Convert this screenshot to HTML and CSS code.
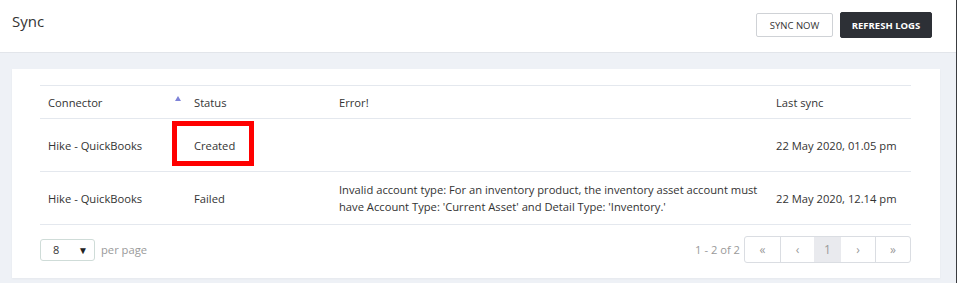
FILE: index.html
```html
<!DOCTYPE html>
<html lang="en">
<head>
  <meta charset="UTF-8">
  <meta name="viewport" content="width=device-width, initial-scale=1.0">
  <title>Sync</title>
  <link rel="stylesheet" href="styles.css">
</head>
<body>
  <div class="page">
    <header class="topbar">
      <h1 class="page-title">Sync</h1>
      <div class="actions">
        <button class="btn btn-light">SYNC NOW</button>
        <button class="btn btn-dark">REFRESH LOGS</button>
      </div>
    </header>

    <main class="content">
      <div class="panel">
        <table class="log-table">
          <colgroup>
            <col style="width: 146px">
            <col style="width: 145px">
            <col style="width: 437px">
            <col>
          </colgroup>
          <thead>
            <tr>
              <th class="sortable">Connector <span class="sort-arrow"></span></th>
              <th>Status</th>
              <th>Error!</th>
              <th>Last sync</th>
            </tr>
          </thead>
          <tbody>
            <tr>
              <td>Hike - QuickBooks</td>
              <td class="status-cell">Created <span class="highlight"></span></td>
              <td></td>
              <td>22 May 2020, 01.05 pm</td>
            </tr>
            <tr>
              <td>Hike - QuickBooks</td>
              <td>Failed</td>
              <td>Invalid account type: For an inventory product, the inventory asset account must have Account Type: 'Current Asset' and Detail Type: 'Inventory.'</td>
              <td>22 May 2020, 12.14 pm</td>
            </tr>
          </tbody>
        </table>

        <div class="table-footer">
          <div class="per-page">
            <div class="select">
              <span>8</span>
              <span class="select-arrow">&#9660;</span>
            </div>
            <span class="muted">per page</span>
          </div>
          <div class="pager">
            <span class="muted">1 - 2 of 2</span>
            <ul class="pages">
              <li class="w35">&laquo;</li>
              <li class="w33">&lsaquo;</li>
              <li class="active">1</li>
              <li>&rsaquo;</li>
              <li>&raquo;</li>
            </ul>
          </div>
        </div>
      </div>
    </main>
  </div>
</body>
</html>
```

FILE: styles.css
```css
:root {
  --text-color: #333333;
  --muted-color: #9a9a9a;
  --border-color: #e4e8ee;
  --background-color: #eef1f6;
}

body {
  margin: 0;
  font-family: "Open Sans", "Liberation Sans", Arial, sans-serif;
  color: var(--text-color);
  font-size: 11.2px;
}

.page {
  width: 956px;
  height: 283px;
  border-right: 1px solid #3a3c40;
  background-color: var(--background-color);
  overflow: hidden;
}

.topbar {
  height: 52px;
  background-color: #ffffff;
  border-bottom: 1px solid #e2e5ea;
  display: flex;
  align-items: flex-start;
  justify-content: space-between;
  padding: 0 24px 0 12px;
}

.page-title {
  margin: 10px 0 0;
  font-size: 15px;
  font-weight: normal;
  line-height: 22px;
}

.actions {
  display: flex;
  gap: 7px;
  margin-top: 12px;
}

.btn {
  font-family: "Open Sans", "Liberation Sans", Arial, sans-serif;
  font-size: 9.5px;
  height: 26px;
  border-radius: 2px;
  padding: 0;
  cursor: pointer;
}

.btn-light {
  width: 77px;
  height: 24px;
  margin-top: 1px;
  background-color: #ffffff;
  border: 1px solid #cfd2d6;
  color: #333333;
}

.btn-dark {
  width: 92px;
  background-color: #2d3036;
  border: 1px solid #2d3036;
  color: #ffffff;
  font-weight: bold;
}

.content {
  padding: 16px 16px 0 12px;
}

.panel {
  background-color: #ffffff;
  height: 209px;
  padding: 16px 29px 0 28px;
  box-sizing: border-box;
  box-shadow: 0 1px 2px rgba(0, 0, 0, 0.04);
}

.log-table {
  width: 871px;
  border-collapse: collapse;
  table-layout: fixed;
}

.log-table th,
.log-table td {
  text-align: left;
  padding: 0 8px;
  border-top: 1px solid var(--border-color);
  border-bottom: 1px solid var(--border-color);
  vertical-align: middle;
  line-height: 17px;
}

.log-table th {
  font-weight: normal;
  height: 32px;
}

.log-table td {
  height: 52px;
}

.sortable,
.status-cell {
  position: relative;
}

.sort-arrow {
  position: absolute;
  right: 5px;
  top: 10px;
  width: 0;
  height: 0;
  border-left: 3px solid transparent;
  border-right: 3px solid transparent;
  border-bottom: 5px solid #7e83d8;
}

/* red annotation box */
.highlight {
  position: absolute;
  left: -14px;
  top: 2px;
  width: 72px;
  height: 35px;
  border: 5px solid #ff0000;
}

.table-footer {
  display: flex;
  justify-content: space-between;
  align-items: center;
  margin-top: 11px;
}

.per-page {
  display: flex;
  align-items: center;
  gap: 6px;
}

.select {
  width: 55px;
  height: 22px;
  box-sizing: border-box;
  border: 1px solid #cfdcd8;
  border-radius: 3px;
  display: flex;
  align-items: center;
  justify-content: space-between;
  padding: 0 6px 0 12px;
  font-size: 11px;
}

.select-arrow {
  font-size: 10px;
  color: #222222;
}

.muted {
  color: var(--muted-color);
}

.pager {
  display: flex;
  align-items: center;
  gap: 4px;
}

.pages {
  list-style: none;
  margin: 0;
  padding: 0;
  display: flex;
  border: 1px solid #dadde2;
  border-radius: 3px;
  height: 27px;
  box-sizing: border-box;
}

.pages li {
  width: 34px;
  display: flex;
  align-items: center;
  justify-content: center;
  color: var(--muted-color);
  border-left: 1px solid #dadde2;
  font-size: 12px;
}

.pages li:first-child {
  border-left: none;
}

.pages li.w35 {
  width: 35px;
}

.pages li.w33 {
  width: 33px;
}

.pages li.active {
  width: 27px;
  background-color: #e9eaee;
  border-left: none;
}

.pages li.active + li {
  border-left: none;
}
```
